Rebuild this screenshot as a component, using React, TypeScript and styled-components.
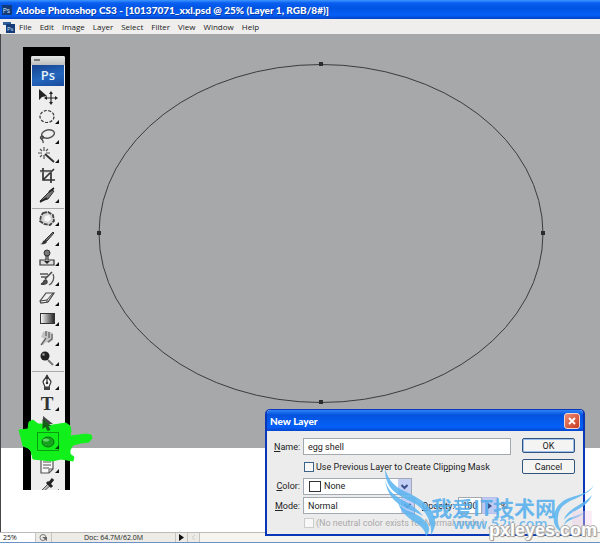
import React, { ReactNode } from "react";
import styled, { createGlobalStyle, css } from "styled-components";

const ui = css`
  font-family: Roboto, "Noto Sans", sans-serif;
  font-size: 9px;
  line-height: 12px;
  color: #222;
`;

const titleFont = css`
  margin: 0;
  font-family: Lato, sans-serif;
  font-size: 10px;
  line-height: 14px;
  font-weight: 900;
  color: #fff;
  white-space: nowrap;
`;

const GlobalStyle = createGlobalStyle`
  *, *::before { box-sizing: border-box; }
  body { margin: 0; ${ui} }
  button, input, select { font: inherit; color: inherit; margin: 0; }
`;

const Shell = styled.div`
  position: relative;
  display: flex;
  flex-direction: column;
  min-height: 100vh;
  overflow: hidden;
  background: #fff;
`;

const TitleBar = styled.header`
  display: flex;
  align-items: center;
  gap: 4px;
  height: 19px;
  padding: 0 2px;
  background: linear-gradient(#3d95ff 0, #0a5ff0 3px, #0054e3 8px, #0560f8 15px, #0144c8 19px);
`;

const WindowTitle = styled.h1`
  ${titleFont}
  text-shadow: 1px 1px #0a3ca8;
`;

const MenuBar = styled.nav`
  display: flex;
  align-items: center;
  height: 15px;
  padding-left: 3px;
  background: #efeeed;
`;

const MenuButton = styled.button`
  border: 0;
  padding: 0 4px;
  background: none;
  font-family: "Open Sans", sans-serif;
  font-size: 8px;
  line-height: 12px;
`;

const Workspace = styled.main`
  display: flex;
  flex: 1;
  flex-direction: column;
  border-left: 1px solid #45454a;
`;

const Pasteboard = styled.div`
  position: relative;
  flex: 1;
  background: #a7a8aa;
`;

const Paper = styled.div`
  height: 84px;
  background: #fff;
`;

const PathSvg = styled.svg`
  position: absolute;
  left: 94px;
  top: 26px;
  width: calc(100% - 147px);
  height: auto;
  overflow: visible;
`;

const Strip = styled.aside`
  position: absolute;
  left: 22px;
  top: 13px;
  width: 47px;
  height: 443px;
  padding: 9px 5px 0 8px;
  background: #000;
  overflow: hidden;
`;

const Palette = styled.div`
  display: flex;
  flex-direction: column;
  border-radius: 2px 2px 0 0;
  background: #eeeeee;
`;

const Grip = styled.div`
  height: 9px;
  padding: 3px;
  border-radius: 2px 2px 0 0;
  background: linear-gradient(#e6e6e6, #bcbebe);
  &::before {
    content: "";
    display: block;
    width: 6px;
    height: 2px;
    background: #777;
  }
`;

const PsLogo = styled.div`
  height: 21px;
  margin: 0 1px 1px;
  background: linear-gradient(165deg, #17428e, #2467bd 55%, #184a9c);
  color: #e4f1fc;
  font-family: "Open Sans", sans-serif;
  font-size: 13px;
  line-height: 20px;
  font-weight: 600;
  text-align: center;
`;

const ToolGroup = styled.div<{ $height: number }>`
  display: flex;
  flex-direction: column;
  height: ${(p) => p.$height}px;
  & + & {
    margin-top: 4px;
    box-shadow: 0 -2px 0 -1px #aaa;
  }
`;

const Tool = styled.button`
  flex: 1 1 0;
  min-height: 0;
  border: 0;
  padding: 0 6px;
  background: none;
  line-height: 0;
  svg { width: 22px; height: 19px; overflow: visible; }
`;

const Highlight = styled.svg`
  position: absolute;
  left: 15px;
  top: 384px;
  width: 78px;
  height: 46px;
  pointer-events: none;
`;

const StatusBar = styled.footer`
  display: flex;
  height: 11px;
  border-top: 1px solid #bbb;
  border-bottom: 1px solid #6c91c9;
  background: #f5f4ee;
  font-family: "Open Sans", sans-serif;
  font-size: 7px;
  line-height: 10px;
`;

const StatusCell = styled.div<{ $width: number; $center?: boolean; $white?: boolean }>`
  width: ${(p) => p.$width}px;
  padding: 0 3px;
  border-right: 1px solid #c5c4be;
  text-align: ${(p) => (p.$center ? "center" : "left")};
  background: ${(p) => (p.$white ? "#fff" : "#ecebe6")};
  svg { display: block; margin: 0 auto; }
`;

const Dialog = styled.section`
  position: absolute;
  right: 15px;
  bottom: 7px;
  width: 320px;
  border: 2px solid #0a36b8;
  border-top-width: 1px;
  border-radius: 5px 5px 0 0;
  background: #ececec;
`;

const DialogTitle = styled.div`
  display: flex;
  align-items: center;
  justify-content: space-between;
  height: 21px;
  padding: 0 3px;
  border-radius: 4px 4px 0 0;
  background: linear-gradient(#2c82f8 0, #0453dd 5px, #0560f8 17px, #0345cc 21px);
  h2 { ${titleFont} }
`;

const CloseButton = styled.button`
  width: 16px;
  height: 16px;
  border: 1px solid #f3d6d0;
  border-radius: 3px;
  padding: 0;
  background: linear-gradient(135deg, #ee8d74, #c73a20);
  line-height: 0;
`;

const DialogBody = styled.form`
  display: flex;
  justify-content: space-between;
  height: 103px;
  padding: 7px 8px 0 7px;
`;

const Fields = styled.div`
  display: grid;
  grid-template-columns: 26px 208px;
  grid-template-rows: 17px 17px 16px 17px 12px;
  column-gap: 3px;
  row-gap: 3px;
  align-items: center;
`;

const Label = styled.label`
  text-align: right;
  white-space: nowrap;
`;

const TextBox = styled.input`
  height: 17px;
  min-width: 0;
  width: 100%;
  border: 1px solid #a3a8ad;
  padding: 0 4px;
  background: #fff;
`;

const CheckRow = styled.label<{ $disabled?: boolean }>`
  grid-column: 2;
  display: flex;
  align-items: center;
  gap: 2px;
  padding-left: 1px;
  white-space: nowrap;
  color: ${(p) => (p.$disabled ? "#aaa" : "#222")};
  input {
    appearance: none;
    width: 10px;
    height: 10px;
    border: 1px solid ${(p) => (p.$disabled ? "#ccc" : "#3f6387")};
    background: #f8f8f8;
  }
`;

const Row = styled.div`
  display: flex;
  align-items: center;
`;

const SelectBox = styled.div<{ $width: number }>`
  position: relative;
  width: ${(p) => p.$width}px;
  height: 17px;
  select {
    appearance: none;
    width: 100%;
    height: 100%;
    border: 1px solid #a3a8b5;
    border-radius: 0;
    padding: 0 16px 0 4px;
    background: #fff;
  }
`;

const SwatchSelect = styled(SelectBox)`
  select { padding-left: 20px; }
  &::before {
    content: "";
    position: absolute;
    left: 6px;
    top: 3px;
    width: 12px;
    height: 11px;
    border: 1px solid #333;
    background: #fff;
  }
`;

const Arrow = styled.svg`
  position: absolute;
  right: 1px;
  top: 1px;
  width: 13px;
  height: 15px;
  background: #c3cff5;
  pointer-events: none;
`;

const OpacityLabel = styled.label`
  margin: 0 4px 0 7px;
`;

const OpacityBox = styled(TextBox)`
  width: 24px;
  padding: 0 3px;
`;

const Stepper = styled.button`
  width: 16px;
  height: 17px;
  border: 1px solid #b5c1ea;
  padding: 0;
  margin-right: 2px;
  background: #bfcaf2;
  line-height: 0;
`;

const Actions = styled.div`
  display: flex;
  flex-direction: column;
  gap: 6px;
`;

const PushButton = styled.button<{ $primary?: boolean }>`
  width: 53px;
  height: 15px;
  border: 1px solid #31557f;
  border-radius: 2px;
  padding: 0;
  background: #f4f4f2;
  box-shadow: ${(p) => (p.$primary ? "inset 0 0 0 1px #9ebcec" : "none")};
`;

const Watermark = styled.div`
  position: absolute;
  right: 0;
  bottom: 0;
  width: 220px;
  height: 78px;
  pointer-events: none;
  svg { position: absolute; inset: 0; }
`;

const BrandName = styled.div`
  position: absolute;
  left: 51px;
  top: 30px;
  display: flex;
  align-items: center;
  font-family: "Noto Sans CJK SC", sans-serif;
  font-size: 21px;
  line-height: 24px;
  font-weight: 700;
  color: rgba(80, 172, 236, 0.85);
  white-space: nowrap;
`;

const BrandSite = styled.div`
  position: absolute;
  left: 73px;
  top: 51px;
  font-family: "Open Sans", sans-serif;
  font-size: 14px;
  line-height: 16px;
  font-weight: 600;
  color: rgba(80, 172, 236, 0.8);
`;

const SourceSite = styled.div`
  position: absolute;
  right: 3px;
  bottom: 3px;
  font-family: "Liberation Sans", sans-serif;
  font-size: 18px;
  line-height: 20px;
  font-weight: 700;
  color: #fff;
  text-shadow: 1px 0 #aaa, -1px 0 #aaa, 0 1px #aaa, 0 -1px #aaa, 1px 1px 1px #888;
`;

const flyout = <path d="M22 13v4h-4z" fill="#111" />;

const icons: Record<string, ReactNode> = {
  Move: (
    <>
      <path d="M2 2v11l3-3 5-1z" fill="#222" />
      <path d="M14 6v10M9 11h10" stroke="#222" strokeWidth="1.2" />
      <path d="M14 4l2 3h-4zM14 18l2-3h-4zM7 11l3-2v4zM21 11l-3-2v4z" fill="#222" />
    </>
  ),
  "Elliptical Marquee": <ellipse cx="10" cy="9.500" rx="7" ry="6" fill="none" stroke="#333" strokeDasharray="3 1.500" strokeWidth="1.2" />,
  Lasso: (
    <>
      <ellipse cx="11" cy="7" rx="6.500" ry="4" transform="rotate(-12 11 7)" fill="none" stroke="#555" strokeWidth="1.500" />
      <path d="M5 9c-3 1-1 4 1 2s-3-3-2 0 3 2 2 5" fill="none" stroke="#444" strokeWidth="1.300" />
    </>
  ),
  "Magic Wand": (
    <>
      <path d="M8 8l9 8" stroke="#333" strokeWidth="2" />
      <path d="M7 1v4M7 9v4M1 7h4M9 7h4M3 3l2 2M11 3L9 5M3 11l2-2" stroke="#555" strokeWidth="1.200" />
    </>
  ),
  Crop: (
    <>
      <path d="M6 2v12h12M3 5h11v12M6 14L17 3" fill="none" stroke="#333" strokeWidth="1.700" />
      <path d="M3 6h12" stroke="#999" strokeWidth=".6" />
    </>
  ),
  Slice: (
    <>
      <path d="M3 15L14 4l3 1-6 8z" fill="#777" stroke="#333" />
      <path d="M12 6l5-4M3 16l7-4" stroke="#222" strokeWidth="1.800" />
    </>
  ),
  "Healing Brush": (
    <>
      <path d="M6 4l5-1 5 3 1 6-4 4-6-1-4-3 1-5z" fill="#d4d4d4" stroke="#444" strokeWidth="1.800" strokeDasharray="4 1" />
      <path d="M8 7l4-1 2 4-3 3-4-2z" fill="#f6f6f6" />
    </>
  ),
  Brush: (
    <>
      <path d="M8 11L16 3l1 1-7 8z" fill="#777" stroke="#333" />
      <path d="M3 15c4 0 1-4 6-4 3 3-2 5-6 4z" fill="#333" />
    </>
  ),
  "Clone Stamp": (
    <>
      <circle cx="10" cy="4" r="3" fill="#777" stroke="#333" />
      <path d="M9 7h2v4h6v5H3v-5h6z" fill="#ddd" stroke="#333" strokeWidth="1.200" />
      <path d="M7 12h6l-3 3z" fill="#222" />
    </>
  ),
  "History Brush": (
    <>
      <path d="M8 10l7-7M4 15c4 0 1-4 5-4 3 3-1 5-5 4z" fill="#555" stroke="#444" strokeWidth="1.500" />
      <path d="M3 5h8M4 8h6M16 5c2 4 0 9-4 11" fill="none" stroke="#555" strokeWidth="1.300" />
    </>
  ),
  Eraser: (
    <>
      <path d="M3 12l6-8h8l-6 9-7 1z" fill="#eee" stroke="#444" strokeWidth="1.200" />
      <path d="M3 12l7-1 6-7M10 11v3" fill="none" stroke="#444" />
    </>
  ),
  Gradient: (
    <>
      <defs><linearGradient id="ramp"><stop stopColor="#fff" /><stop offset="1" stopColor="#222" /></linearGradient></defs>
      <rect x="3.500" y="4.500" width="14" height="10" fill="url(#ramp)" stroke="#333" />
    </>
  ),
  Smudge: (
    <>
      <path d="M4 16l4-6-4-2 2-5 4-1 6 2v7l-4 3-3-1-3 3z" fill="#c4c4c4" />
      <path d="M4 16l5-7M9 2v5M12 3v6M15 5v5l-4 3" fill="none" stroke="#666" strokeWidth="1.300" />
    </>
  ),
  Dodge: (
    <>
      <circle cx="8" cy="7" r="4.500" fill="#222" />
      <circle cx="6.500" cy="5.500" r="1.300" fill="#999" />
      <path d="M11 11l5 5" stroke="#777" strokeWidth="2" />
    </>
  ),
  Pen: (
    <>
      <path d="M10 2c1 4 4 5 4 7l-2 5H8L6 9c0-2 3-3 4-7zM10 3v7" fill="#fff" stroke="#333" strokeWidth="1.200" />
      <circle cx="10" cy="10" r="1.300" fill="#333" />
      <path d="M7 14h6v3H7z" fill="#444" />
    </>
  ),
  Type: <text x="10" y="16" textAnchor="middle" fontFamily="Liberation Serif, serif" fontWeight="700" fontSize="19" fill="#333">T</text>,
  "Path Selection": <path d="M6 2v12l3-3 2 5 3-1-2-5h4z" fill="#444" />,
  "Ellipse Shape": <ellipse cx="10.500" cy="9" rx="6" ry="5" fill="#777" stroke="#444" />,
  Notes: (
    <>
      <path d="M4 3h12v10l-4 4H4z" fill="#f7f7f7" stroke="#555" strokeWidth="1.200" />
      <path d="M6 6h8M6 9h8M6 12h6M12 17v-4h4" fill="none" stroke="#555" />
    </>
  ),
  Eyedropper: (
    <>
      <path d="M4 15l8-8 2 2-8 7z" fill="#bbb" stroke="#555" />
      <path d="M10 6l5 5M12 8l4-5" stroke="#222" strokeWidth="3" />
    </>
  ),
};

const groups: { height: number; tools: string[] }[] = [
  { height: 118, tools: ["Move", "Elliptical Marquee", "Lasso", "Magic Wand", "Crop", "Slice"] },
  { height: 159, tools: ["Healing Brush", "Brush", "Clone Stamp", "History Brush", "Eraser", "Gradient", "Smudge", "Dodge"] },
  { height: 124, tools: ["Pen", "Type", "Path Selection", "Ellipse Shape", "Notes", "Eyedropper"] },
];

const menus = ["File", "Edit", "Image", "Layer", "Select", "Filter", "View", "Window", "Help"];

function Chevron() {
  return (
    <Arrow viewBox="0 0 13 15" aria-hidden="true">
      <path d="M3.500 6l3 3 3-3" fill="none" stroke="#3a4f88" strokeWidth="2" />
    </Arrow>
  );
}

function PsMark({ large }: { large?: boolean }) {
  const size = large ? 12 : 10;
  return (
    <svg width={size} height={size} viewBox="0 0 12 12" aria-hidden="true">
      {large && <path d="M0 1h8v9H3V4H0z" fill="#2c5e9c" />}
      <rect x={large ? 3 : 0} y={large ? 3 : 0} width={large ? 9 : 12} height={large ? 9 : 12} fill="#123b78" />
      <text x={large ? 4 : 1} y={large ? 10 : 9} fontFamily="Open Sans, sans-serif" fontSize={large ? 6 : 8} fill="#d5e8ff">Ps</text>
    </svg>
  );
}

function Toolbox() {
  return (
    <Strip aria-label="Tools">
      <Palette>
        <Grip />
        <PsLogo>Ps</PsLogo>
        {groups.map((group) => (
          <ToolGroup key={group.tools[0]} $height={group.height}>
            {group.tools.map((name) => (
              <Tool key={name} type="button" aria-label={name}>
                <svg viewBox="0 0 22 19">
                  {icons[name]}
                  {!["Move", "Crop"].includes(name) && flyout}
                </svg>
              </Tool>
            ))}
          </ToolGroup>
        ))}
      </Palette>
    </Strip>
  );
}

function MarkerStroke() {
  return (
    <Highlight viewBox="0 0 78 46" aria-hidden="true">
      <path
        d="M3 12l9-1 1-7 4-2 5 4h4l3 2 8-1 13-2 4 3 1 5-1 5 9-1 7-1 5 1 1 3-3 4-8 1-8 2-3 5v4l4 3-1 4-6-1-6-1-9 2-10-1-9-1-2-8-3-3-5-2-2-9z"
        fill="#12f01c"
        stroke="#12f01c"
        strokeLinejoin="round"
        strokeWidth="1"
      />
      <path d="M26.500 1v10l3-2 2 4 3-1-2-4h3z" fill="#155f18" />
      <rect x="21.500" y="14.500" width="21" height="18" fill="none" stroke="#0b9c12" />
      <ellipse cx="32" cy="24" rx="6" ry="5" fill="#18a31e" stroke="#0b7010" />
      <ellipse cx="30" cy="22" rx="3" ry="1.500" fill="#66d36a" />
      <path d="M43 27v4h-4z" fill="#063d08" />
    </Highlight>
  );
}

function NewLayerDialog() {
  return (
    <Dialog role="dialog" aria-labelledby="dialog-title">
      <DialogTitle>
        <h2 id="dialog-title">New Layer</h2>
        <CloseButton type="button" aria-label="Close">
          <svg width="10" height="10" viewBox="0 0 10 10"><path d="M2 2l6 6M8 2L2 8" stroke="#fff" strokeWidth="1.800" /></svg>
        </CloseButton>
      </DialogTitle>
      <DialogBody>
        <Fields>
          <Label htmlFor="name"><u>N</u>ame:</Label>
          <TextBox id="name" defaultValue="egg shell" />
          <CheckRow>
            <input type="checkbox" />
            <span>Use Previous Layer to Create Cli<u>p</u>ping Mask</span>
          </CheckRow>
          <Label htmlFor="color"><u>C</u>olor:</Label>
          <SwatchSelect $width={109}>
            <select id="color"><option>None</option></select>
            <Chevron />
          </SwatchSelect>
          <Label htmlFor="mode"><u>M</u>ode:</Label>
          <Row>
            <SelectBox $width={112}>
              <select id="mode"><option>Normal</option></select>
              <Chevron />
            </SelectBox>
            <OpacityLabel htmlFor="opacity"><u>O</u>pacity:</OpacityLabel>
            <OpacityBox id="opacity" defaultValue="100" />
            <Stepper type="button" aria-label="Adjust opacity">
              <svg width="6" height="6" viewBox="0 0 6 6"><path d="M1 0l4 3-4 3z" fill="#3a4f88" /></svg>
            </Stepper>
            %
          </Row>
          <CheckRow $disabled>
            <input type="checkbox" disabled />
            <span>(No neutral color exists for Normal mode.)</span>
          </CheckRow>
        </Fields>
        <Actions>
          <PushButton type="button" $primary>OK</PushButton>
          <PushButton type="button">Cancel</PushButton>
        </Actions>
      </DialogBody>
    </Dialog>
  );
}

export default function App() {
  return (
    <Shell>
      <GlobalStyle />
      <TitleBar>
        <PsMark />
        <WindowTitle>Adobe Photoshop CS3 - [10137071_xxl.psd @ 25% (Layer 1, RGB/8#)]</WindowTitle>
      </TitleBar>
      <MenuBar>
        <PsMark large />
        {menus.map((menu) => <MenuButton key={menu} type="button">{menu}</MenuButton>)}
      </MenuBar>
      <Workspace>
        <Pasteboard>
          <PathSvg viewBox="0 0 452 346" aria-hidden="true">
            <ellipse cx="226" cy="173.500" rx="222" ry="169" fill="none" stroke="#3c3c3e" />
            <path d="M224 2h4v4h-4zM224 340h4v4h-4zM2 171h4v4H2zM446 171h4v4h-4z" fill="#2c2c2e" />
          </PathSvg>
          <Toolbox />
          <MarkerStroke />
        </Pasteboard>
        <Paper />
      </Workspace>
      <StatusBar>
        <StatusCell $width={36} $white>25%</StatusCell>
        <StatusCell $width={16}>
          <svg width="9" height="9" viewBox="0 0 9 9"><circle cx="4" cy="4.500" r="3" fill="none" stroke="#777" /><path d="M3 4h5v4z" fill="#666" /></svg>
        </StatusCell>
        <StatusCell $width={124} $center>Doc: 64.7M/62.0M</StatusCell>
        <StatusCell $width={12}>
          <svg width="5" height="9" viewBox="0 0 5 9"><path d="M0 1l5 3.500L0 8z" fill="#111" /></svg>
        </StatusCell>
        <StatusCell $width={12}>
          <svg width="5" height="9" viewBox="0 0 5 9"><path d="M4 2L1 4.500 4 7" fill="none" stroke="#ccc" /></svg>
        </StatusCell>
      </StatusBar>
      <NewLayerDialog />
      <Watermark>
        <svg width="220" height="78" viewBox="0 0 220 78" aria-hidden="true">
          <g fill="#5db5f0" fillOpacity=".88">
            <path d="M5 4C11 23 22 24 36 32C54 42 60 57 51 70C52 55 45 43 30 36C15 29 5 22 5 4z" />
            <path d="M5 15C10 35 30 34 43 51C33 44 9 43 5 15z" />
            <path d="M17 33C19 47 35 45 44 55C52 62 49 68 46 71C44 55 21 58 17 33z" />
            <path d="M214 20C207 34 184 33 179 47C176 57 179 64 184 68C170 64 171 45 182 37C192 29 206 32 214 20z" />
            <path d="M212 30C207 44 192 44 184 55C187 43 204 40 212 30z" />
            <path d="M204 47C199 55 190 52 184 60C187 50 198 52 204 47z" />
          </g>
          <path d="M192 46h20v20h-20z" fill="#f3cfe8" fillOpacity=".4" />
        </svg>
        <BrandName>我爱IT技术网</BrandName>
        <BrandSite>www.52ij.com</BrandSite>
        <SourceSite>pxleyes.com</SourceSite>
      </Watermark>
    </Shell>
  );
}
